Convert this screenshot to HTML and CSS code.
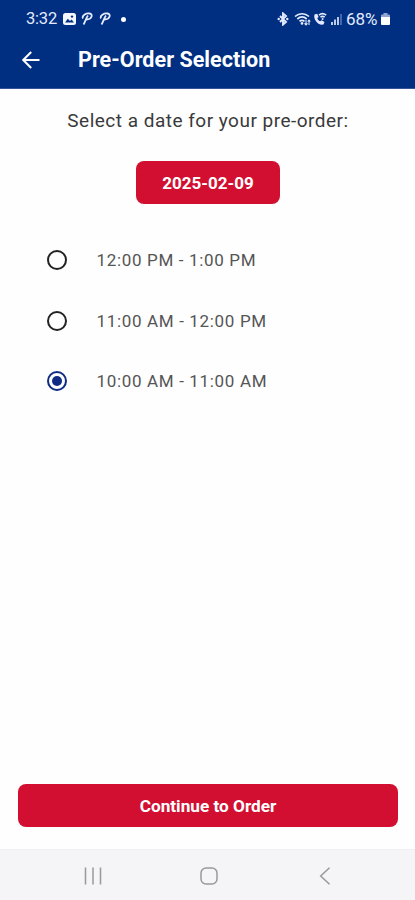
FILE: index.html
```html
<!DOCTYPE html>
<html lang="en">
<head>
<meta charset="utf-8">
<title>Pre-Order Selection</title>
<link rel="stylesheet" href="styles.css">
</head>
<body>
<div class="screen">
  <header class="header">
    <div class="status">
      <div class="status-left">
        <span class="clock">3:32</span>
        <svg class="i-photo" width="13" height="12" viewBox="0 0 13 12"><rect width="13" height="12" rx="2.5" fill="#f4f7ff"/><path d="M2 9.5 4.8 5.8 7 8l1.6-1.5L11 9.5z" fill="#002f82"/><circle cx="9" cy="3.6" r="1.2" fill="#002f82"/></svg>
        <svg class="i-p" width="12" height="14" viewBox="0 0 12 14"><path d="M2.500 12.500C4 10.500 5 6 7 3.500M2 6.500C.5 3.500 5 1 8.500 1.500c4 .6 2.200 6-3 6"/></svg>
        <svg class="i-p second" width="12" height="14" viewBox="0 0 12 14"><path d="M2.500 12.500C4 10.500 5 6 7 3.500M2 6.500C.5 3.500 5 1 8.500 1.500c4 .6 2.200 6-3 6"/></svg>
        <span class="dot"></span>
      </div>
      <div class="status-right">
        <svg width="12" height="14" viewBox="0 0 12 14"><path d="m3 4 6 6-3 2.600V1.400L9 4l-6 6" fill="none" stroke="#e4eaff" stroke-width="1.900"/><circle cx="1.700" cy="7" r="1.200" fill="#e4eaff"/><circle cx="10.300" cy="7" r="1.200" fill="#e4eaff"/></svg>
        <svg class="i-wifi" width="17" height="14" viewBox="0 0 17 14"><g fill="none" stroke="#e4eaff" stroke-width="1.700"><path d="M1 4.500C5 .8 11 .8 15 4.500M3.300 7c3-2.600 6.500-2.600 9.400 0M5.500 9.300c1.600-1.300 3.400-1.300 5 0"/><path d="M12 8v5m-1.500-1.600L12 13l1.500-1.600M15 13V8m-1.300 1.500L15 8l1.300 1.500" stroke-width="1.100"/></g><circle cx="8" cy="11.400" r="1.300" fill="#e4eaff"/></svg>
        <svg class="i-call" width="14" height="14" viewBox="0 0 14 14"><path d="M1.500 2.500C0 7 4.800 13.800 10.500 12.500l1-2.500-2.900-1.700-1.500 1C5.600 8.700 4.600 7.300 4.300 5.900l1.300-1L4.200 1.800z" fill="#e4eaff"/><path d="M6 3.200c2-1.800 5-1.800 7.200 0M7.500 5.200c1.300-1 2.900-1 4.200 0" fill="none" stroke="#e4eaff" stroke-width="1.600"/><circle cx="9.600" cy="6.900" r="1" fill="#e4eaff"/></svg>
        <svg class="i-signal" width="11" height="12" viewBox="0 0 11 12"><path d="M0 9h2v3H0zM3 6.500h2V12H3zM6 4h2v8H6z" fill="#bcc9e9"/><path d="M9 1h2v11H9z" fill="#4467ad"/></svg>
        <span class="percent">68%</span>
        <svg class="i-battery" width="9" height="12" viewBox="0 0 9 12"><path d="M2.500 0h4v1.500H8q1 0 1 1V5H0V2.500q0-1 1-1h1.500z" fill="#8fa4d3"/><path d="M0 4h9v7q0 1-1 1H1q-1 0-1-1z" fill="#fff"/></svg>
      </div>
    </div>
    <div class="appbar">
      <svg class="back" width="18" height="18" viewBox="0 0 18 18"><path d="M17.500 9H1.500M9.200 1 1.200 9l8 8" fill="none" stroke="#fff" stroke-width="2"/></svg>
      <h1 class="title">Pre-Order Selection</h1>
    </div>
  </header>
  <main class="content">
    <p class="prompt">Select a date for your pre-order:</p>
    <button class="button date">2025-02-09</button>
    <div class="slots">
      <div class="slot"><span class="radio"></span><span class="slot-text">12:00 PM - 1:00 PM</span></div>
      <div class="slot"><span class="radio"></span><span class="slot-text">11:00 AM - 12:00 PM</span></div>
      <div class="slot"><span class="radio selected"></span><span class="slot-text">10:00 AM - 11:00 AM</span></div>
    </div>
    <button class="button continue">Continue to Order</button>
  </main>
  <nav class="navbar">
    <svg width="18" height="18" viewBox="0 0 18 18"><path d="M1.500.5v17M9 .5v17M16.500.5v17"/></svg>
    <svg width="18" height="18" viewBox="0 0 18 18"><rect x="1" y="1" width="16" height="16" rx="5"/></svg>
    <svg width="18" height="18" viewBox="0 0 18 18"><path d="M14.500.8 5.700 9l8.800 8.200"/></svg>
  </nav>
</div>
</body>
</html>
```
FILE: styles.css
```css
* { box-sizing: border-box; }
body { margin: 0; background: #fff; font-family: Roboto, "Liberation Sans", sans-serif; }
svg { display: block; flex: none; }
.screen { height: 900px; width: 415px; display: flex; flex-direction: column; background: #fefefe; }
.header { height: 89px; background: #002f82; border-bottom: 1px solid #34539a; color: #fff; }
.status { height: 38px; padding: 0 25px 0 26px; display: flex; align-items: center; justify-content: space-between; }
.status-left, .status-right { display: flex; align-items: center; }
.clock { font-size: 16.5px; line-height: 20px; width: 30px; letter-spacing: -0.2px; color: #e4eaff; }
.i-photo { margin-left: 7px; }
.i-p { margin-left: 5px; fill: none; stroke: #e4eaff; stroke-width: 1.8; }
.i-p.second { margin-left: 6px; }
.dot { width: 5px; height: 5px; border-radius: 50%; background: #fff; margin-left: 10px; }
.i-wifi { margin-left: 5px; }
.i-call { margin-left: 2px; }
.i-signal { margin-left: 4px; }
.percent { font-size: 17px; line-height: 20px; width: 33px; margin-left: 4px; color: #e4eaff; }
.i-battery { margin-left: 2px; }
.appbar { height: 44px; padding-left: 22px; display: flex; align-items: center; }
.title { margin: 0 0 0 38px; font-size: 21.5px; line-height: 26px; font-weight: 700; letter-spacing: 0.04px; }
.content { flex: 1; display: flex; flex-direction: column; align-items: center; padding: 19px 17px 22px 18px; }
.prompt { margin: 0; font-size: 19px; line-height: 26px; letter-spacing: 0.49px; color: #3a3a3a; }
.button { border: 0; border-radius: 8px; background: #d20f30; color: #fff; font-family: inherit; font-weight: 700; height: 43px; padding: 0; }
.date { width: 144px; margin-top: 27px; font-size: 17px; }
.slots { align-self: stretch; margin-top: 26px; padding-left: 29px; }
.slot { height: 60.5px; display: flex; align-items: center; }
.radio { width: 20px; height: 20px; border: 2px solid #222; border-radius: 50%; display: flex; align-items: center; justify-content: center; }
.selected { border-color: #102b83; }
.selected::after { content: ""; width: 10px; height: 10px; border-radius: 50%; background: #102b83; }
.slot-text { margin-left: 29.5px; font-size: 17px; line-height: 24px; letter-spacing: 0.66px; color: #555; }
.continue { align-self: stretch; margin-top: auto; font-size: 17.2px; }
.navbar { height: 51px; background: #f5f5f8; border-top: 1px solid #f0f0f2; display: flex; align-items: center; padding: 2px 82px 0 84px; justify-content: space-between; }
.navbar svg { fill: none; stroke: #999; stroke-width: 1.5; }
```
